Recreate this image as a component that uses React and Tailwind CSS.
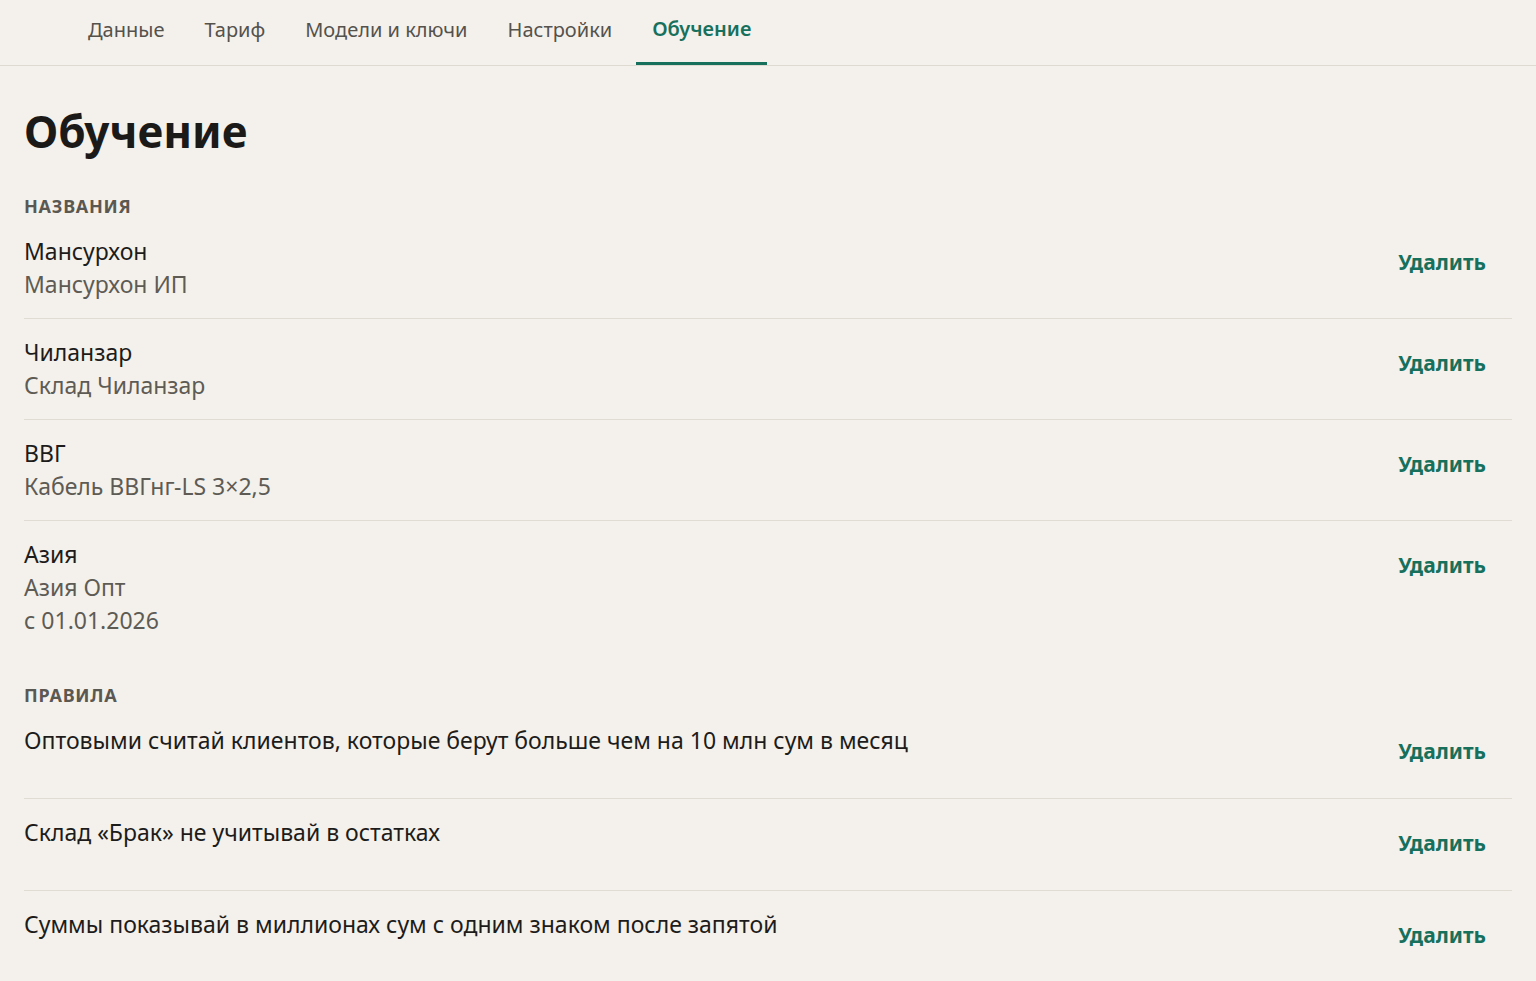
import React from 'react'

const tabs = ['Данные', 'Тариф', 'Модели и ключи', 'Настройки', 'Обучение']

const names = [
  { title: 'Мансурхон', lines: ['Мансурхон ИП'] },
  { title: 'Чиланзар', lines: ['Склад Чиланзар'] },
  { title: 'ВВГ', lines: ['Кабель ВВГнг-LS 3×2,5'] },
  { title: 'Азия', lines: ['Азия Опт', 'с 01.01.2026'] },
]

const rules = [
  'Оптовыми считай клиентов, которые берут больше чем на 10 млн сум в месяц',
  'Склад «Брак» не учитывай в остатках',
  'Суммы показывай в миллионах сум с одним знаком после запятой',
]

const DeleteButton = () => (
  <button
    type="button"
    className="h-14 flex items-center pl-6 pr-[26px] text-[21px] font-bold text-[#17705c] shrink-0"
  >
    Удалить
  </button>
)

const SectionLabel = ({ children, className = '' }) => (
  <div className={`text-[18px] leading-6 font-bold uppercase tracking-[0.04em] text-[#5b5852] ${className}`}>
    {children}
  </div>
)

export default function App() {
  return (
    <div className="min-h-screen bg-[#f4f1ec] text-[#1d1c1a] font-['Noto_Sans',sans-serif]">
      {/* Tabs */}
      <nav className="flex gap-2 pl-[72px] border-b border-[#dedad2]">
        {tabs.map((tab) => {
          const active = tab === 'Обучение'
          return (
            <div
              key={tab}
              className={
                active
                  ? 'px-4 h-[65px] flex items-center pb-[5px] text-[20px] font-semibold text-[#17705c] border-b-[3px] border-[#17705c] -mb-px'
                  : 'px-4 h-[65px] flex items-center pb-[5px] text-[20px] text-[#55524c]'
              }
            >
              {tab}
            </div>
          )
        })}
      </nav>

      <main className="px-6">
        <h1 className="mt-[37px] text-[44px] leading-[56px] font-bold text-[#1b1a18]">Обучение</h1>

        <SectionLabel className="mt-[35px]">Названия</SectionLabel>
        <div>
          {names.map((item, i) => (
            <div
              key={item.title}
              className={`flex items-start justify-between pt-[17px] pb-[17px] ${
                i < names.length - 1 ? 'border-b border-[#e0dcd4]' : ''
              }`}
            >
              <div className="text-[23px] leading-[33px]">
                <div className="text-[#1d1c1a]">{item.title}</div>
                {item.lines.map((line) => (
                  <div key={line} className="text-[#5e5b55]">
                    {line}
                  </div>
                ))}
              </div>
              <DeleteButton />
            </div>
          ))}
        </div>

        <SectionLabel className="mt-[29px]">Правила</SectionLabel>
        <div>
          {rules.map((rule, i) => (
            <div
              key={rule}
              className={`flex items-start justify-between pt-[17px] pb-[18px] ${
                i < rules.length - 1 ? 'border-b border-[#e0dcd4]' : ''
              }`}
            >
              <div className="text-[23px] leading-[33px] text-[#1d1c1a]">{rule}</div>
              <DeleteButton />
            </div>
          ))}
        </div>
      </main>
    </div>
  )
}
